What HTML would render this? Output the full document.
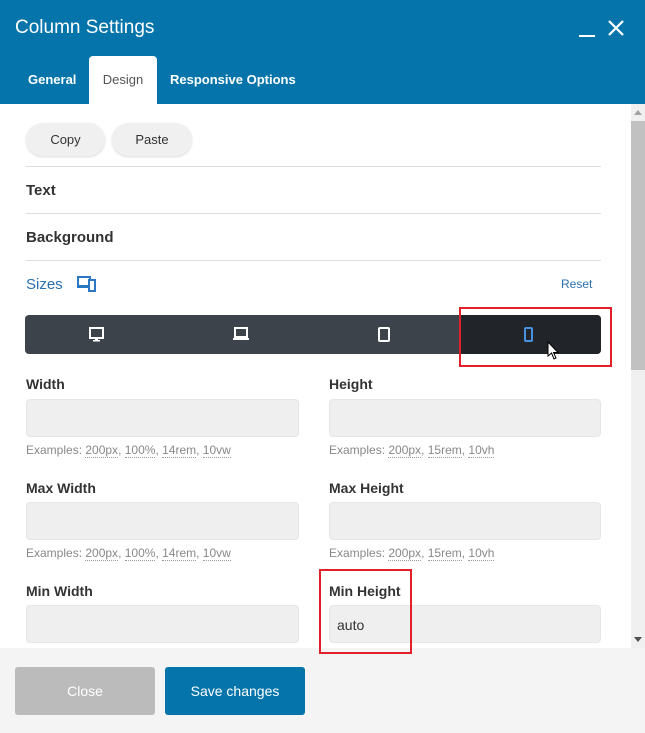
<!DOCTYPE html>
<html><head><meta charset="utf-8"><style>
*{box-sizing:border-box;margin:0;padding:0}
body{width:645px;height:733px;overflow:hidden;font-family:"Liberation Sans",sans-serif;background:#fff;position:relative}
.a{position:absolute}
.hdr{left:0;top:0;width:645px;height:104px;background:#0574aa}
.title{left:15px;top:17px;color:#fff;font-size:19px}
.tab{top:56px;height:48px;line-height:48px;font-size:13px;color:#fff;font-weight:bold}
.line{left:26px;width:575px;height:1px;background:#ddd}
.sec{left:26px;font-size:15px;color:#333;font-weight:bold}
.btn{top:123px;height:33px;border-radius:17px;background:#f0f0f0;box-shadow:0 1px 2px rgba(0,0,0,.15);font-size:13px;color:#333;text-align:center;line-height:33px}
.lbl{font-size:14px;color:#333;font-weight:bold}
.inp{height:38px;width:273px;background:#efefef;border:1px solid #e6e6e6;border-radius:4px}
.ex{font-size:12px;color:#888}
.ex u{text-decoration:none;border-bottom:1px dotted #999}
.red{border:2px solid #e0202a}
</style></head><body>
<div class="a hdr"></div>
<div class="a title">Column Settings</div>
<div class="a" style="left:579px;top:35px;width:16px;height:2px;background:#fff"></div>
<svg class="a" style="left:607px;top:19px" width="18" height="18"><path d="M2 2L16 16M16 2L2 16" stroke="#fff" stroke-width="2.2"/></svg>
<div class="a tab" style="left:28px">General</div>
<div class="a tab" style="left:89px;width:68px;background:#fff;color:#555;font-weight:normal;text-align:center;border-radius:4px 4px 0 0">Design</div>
<div class="a tab" style="left:170px">Responsive Options</div>

<div class="a btn" style="left:26px;width:79px">Copy</div>
<div class="a btn" style="left:112px;width:80px">Paste</div>
<div class="a line" style="top:166px"></div>
<div class="a sec" style="top:182px">Text</div>
<div class="a line" style="top:213px"></div>
<div class="a sec" style="top:229px">Background</div>
<div class="a line" style="top:260px"></div>
<div class="a sec" style="top:276px;color:#2a6fb0;font-weight:normal">Sizes</div>
<svg class="a" style="left:77px;top:276px" width="20" height="16"><rect x="1" y="1" width="12" height="9" fill="none" stroke="#2a78c4" stroke-width="2"/><rect x="0" y="10" width="11" height="2" fill="#2a78c4"/><rect x="12" y="4" width="6" height="11" fill="#fff" stroke="#2a78c4" stroke-width="2"/></svg>
<div class="a" style="left:561px;top:277px;font-size:12px;color:#2a6fb0">Reset</div>

<div class="a" style="left:25px;top:315px;width:576px;height:39px;background:#3d434a;border-radius:4px"></div>
<div class="a" style="left:459px;top:315px;width:142px;height:39px;background:#212529;border-radius:0 4px 4px 0"></div>
<svg class="a" style="left:89px;top:327px" width="16" height="16"><rect x="1" y="1" width="13" height="10" fill="none" stroke="#fff" stroke-width="2"/><rect x="6" y="11" width="3" height="2" fill="#fff"/><rect x="4" y="13" width="7" height="1.5" fill="#fff"/></svg>
<svg class="a" style="left:232px;top:327px" width="18" height="16"><rect x="3" y="1" width="12" height="9" fill="none" stroke="#fff" stroke-width="2"/><rect x="1" y="11" width="16" height="2" fill="#fff"/></svg>
<svg class="a" style="left:378px;top:327px" width="14" height="16"><rect x="1" y="1" width="10" height="13" rx="1" fill="none" stroke="#fff" stroke-width="2"/></svg>
<svg class="a" style="left:524px;top:327px" width="12" height="16"><rect x="1" y="1" width="7" height="13" rx="1" fill="none" stroke="#4a90e2" stroke-width="2"/></svg>
<svg class="a" style="left:547px;top:341px" width="14" height="20"><path d="M1 1L1 15L4.5 12L7 18L9 17L6.5 11.5L11 11.5Z" fill="#fff" stroke="#000" stroke-width="1"/></svg>
<div class="a red" style="left:459px;top:307px;width:153px;height:60px"></div>

<div class="a lbl" style="left:26px;top:376px">Width</div>
<div class="a lbl" style="left:329px;top:376px">Height</div>
<div class="a inp" style="left:26px;top:399px"></div>
<div class="a inp" style="left:329px;top:399px;width:272px"></div>
<div class="a ex" style="left:26px;top:443px">Examples: <u>200px</u>, <u>100%</u>, <u>14rem</u>, <u>10vw</u></div>
<div class="a ex" style="left:329px;top:443px">Examples: <u>200px</u>, <u>15rem</u>, <u>10vh</u></div>

<div class="a lbl" style="left:26px;top:480px">Max Width</div>
<div class="a lbl" style="left:329px;top:480px">Max Height</div>
<div class="a inp" style="left:26px;top:502px"></div>
<div class="a inp" style="left:329px;top:502px;width:272px"></div>
<div class="a ex" style="left:26px;top:546px">Examples: <u>200px</u>, <u>100%</u>, <u>14rem</u>, <u>10vw</u></div>
<div class="a ex" style="left:329px;top:546px">Examples: <u>200px</u>, <u>15rem</u>, <u>10vh</u></div>

<div class="a lbl" style="left:26px;top:583px">Min Width</div>
<div class="a lbl" style="left:329px;top:583px">Min Height</div>
<div class="a inp" style="left:26px;top:605px"></div>
<div class="a inp" style="left:329px;top:605px;width:272px;font-size:14px;color:#333;padding:11px 0 0 7px">auto</div>

<div class="a" style="left:631px;top:104px;width:14px;height:544px;background:#f0f0f0"></div>
<div class="a" style="left:631px;top:121px;width:14px;height:249px;background:#c1c1c1"></div>
<div class="a" style="left:634px;top:110px;width:0;height:0;border-left:4px solid transparent;border-right:4px solid transparent;border-bottom:5px solid #a3a3a3"></div>
<div class="a" style="left:634px;top:637px;width:0;height:0;border-left:4px solid transparent;border-right:4px solid transparent;border-top:5px solid #505050"></div>

<div class="a" style="left:0;top:648px;width:645px;height:85px;background:#f4f4f4"></div>
<div class="a red" style="left:319px;top:569px;width:93px;height:85px"></div>
<div class="a" style="left:15px;top:667px;width:140px;height:48px;background:#bbb;border-radius:3px;color:#fff;font-size:14px;text-align:center;line-height:48px">Close</div>
<div class="a" style="left:165px;top:667px;width:140px;height:48px;background:#0574aa;border-radius:3px;color:#fff;font-size:14px;text-align:center;line-height:48px">Save changes</div>
</body></html>
